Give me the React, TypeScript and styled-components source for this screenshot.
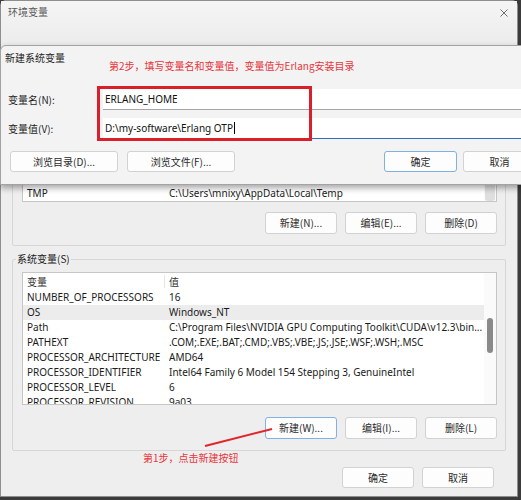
import React from "react";
import styled, { createGlobalStyle } from "styled-components";

const UI = `"Noto Sans", "Noto Sans CJK SC", sans-serif`;
const CJK = `"Noto Sans CJK SC", "Noto Sans", sans-serif`;
const NOTE_RED = "#e8363c";

const GlobalStyle = createGlobalStyle`
  html, body { margin: 0; padding: 0; }
  body { background: #3b3b3b; font-family: ${UI}; }
`;

const Stage = styled.div`
  position: relative;
  width: 521px;
  height: 500px;
  overflow: hidden;
  background: #3b3b3b;
`;

/* ---------- outer "环境变量" window ---------- */

const Window = styled.div`
  width: 518px;
  height: 497px;
  box-sizing: border-box;
  background: #eeeeee;
  border: 1px solid #8e8e8e;
  border-radius: 6px 6px 0 0;
  display: flex;
  flex-direction: column;
`;

const TitleBar = styled.div`
  height: 40px;
  flex: none;
  display: flex;
  justify-content: space-between;
  align-items: flex-start;
  padding: 3px 9px 0 7px;
  background: linear-gradient(#f5f5f5, #ececec);
`;

const TitleText = styled.span`
  font: 10px/16px ${CJK};
  color: #5a5a5a;
`;

const CloseIcon = styled.svg`
  margin-top: 5px;
  width: 8px;
  height: 8px;
`;

const GroupBox = styled.fieldset<{ $gapTop: number }>`
  margin: ${(p) => p.$gapTop}px 11px 0;
  min-width: 0;
  padding: 6px 8px 11px 9px;
  border: 1px solid #d6d6d6;
  border-radius: 2px;
  display: flex;
  flex-direction: column;
`;

const GroupTitle = styled.legend`
  margin-left: -6px;
  padding: 0 1px;
  font: 10px/14px ${CJK};
  color: #222;
`;

const ListBox = styled.div<{ $h: number }>`
  height: ${(p) => p.$h}px;
  box-sizing: border-box;
  border: 1px solid #c6c6c6;
  background: #fff;
  display: flex;
  overflow: hidden;
`;

const ListRows = styled.div<{ $fromBottom?: boolean }>`
  flex: 1;
  min-width: 0;
  display: flex;
  flex-direction: column;
  justify-content: ${(p) => (p.$fromBottom ? "flex-end" : "flex-start")};
`;

const HeaderRow = styled.div`
  flex: none;
  height: 17px;
  display: grid;
  grid-template-columns: 142px 1fr;
  align-items: center;
  padding-left: 4px;
  font: 10px/17px ${CJK};
  color: #333;
`;

const HeaderCell = styled.span`
  position: relative;
  &:first-child::after {
    content: "";
    position: absolute;
    right: 4px;
    top: 2px;
    bottom: 2px;
    border-right: 1px solid #e6e6e6;
  }
`;

const Row = styled.div<{ $selected?: boolean }>`
  flex: none;
  height: 15px;
  display: grid;
  grid-template-columns: 142px 1fr;
  padding-left: 4px;
  font: 10px/15px ${UI};
  color: #1a1a1a;
  white-space: nowrap;
  background: ${(p) => (p.$selected ? "#ececec" : "transparent")};
`;

const Cell = styled.span`
  overflow: hidden;
`;

const ScrollTrack = styled.div`
  flex: none;
  width: 12px;
  background: #fafafa;
  display: flex;
  justify-content: center;
`;

const ScrollThumb = styled.div<{ $top: number; $h: number; $dim?: boolean }>`
  margin-top: ${(p) => p.$top}px;
  width: ${(p) => (p.$dim ? 10 : 6)}px;
  height: ${(p) => p.$h}px;
  border-radius: 3px;
  background: ${(p) => (p.$dim ? "#dedede" : "#8a8a8a")};
`;

const ButtonRow = styled.div<{ $gapTop: number }>`
  margin-top: ${(p) => p.$gapTop}px;
  display: flex;
  justify-content: flex-end;
  gap: 8px;
`;

const Button = styled.button<{ $primary?: boolean; $w?: number; $h?: number }>`
  width: ${(p) => p.$w ?? 72}px;
  height: ${(p) => p.$h ?? 22}px;
  padding: 0;
  box-sizing: border-box;
  border: 1px solid ${(p) => (p.$primary ? "#7fb1e3" : "#d2d2d2")};
  border-radius: 3px;
  background: #fdfdfd;
  font: 10px/1 ${CJK};
  color: #2a2a2a;
  flex: none;
`;

const FooterRow = styled.div`
  margin-top: 16px;
  padding-right: 23px;
  display: flex;
  justify-content: flex-end;
  gap: 8px;
`;

/* ---------- "新建系统变量" dialog on top ---------- */

const Dialog = styled.div`
  position: absolute;
  top: 45px;
  left: 0;
  width: 545px;
  height: 140px;
  box-sizing: border-box;
  background: #f3f3f3;
  border: 1px solid #a3a3a3;
  border-radius: 6px 6px 0 0;
  box-shadow: 0 3px 6px rgba(0, 0, 0, 0.35);
  display: flex;
  flex-direction: column;
`;

const DialogHeader = styled.div`
  display: flex;
  align-items: flex-start;
  padding: 4px 0 0 4px;
`;

const DialogTitle = styled.span`
  font: 10px/16px ${CJK};
  color: #1e1e1e;
`;

const StepNote = styled.span`
  margin: 8px 0 0 44px;
  font: 10px/16px ${CJK};
  color: ${NOTE_RED};
`;

const FieldGrid = styled.div`
  position: relative;
  margin-top: 12px;
  padding: 3px 0;
  display: grid;
  grid-template-columns: 102px 1fr;
  grid-auto-rows: 21px;
  row-gap: 8px;
  align-items: center;
`;

const FieldLabel = styled.span`
  padding-left: 7px;
  font: 10px/14px ${CJK};
  color: #1e1e1e;
`;

const FieldBox = styled.div<{ $focused?: boolean }>`
  height: 21px;
  box-sizing: border-box;
  padding-left: 2px;
  background: #fff;
  border-bottom: ${(p) => (p.$focused ? "1.5px solid #2f6ebd" : "1px solid #a6a6a6")};
  display: flex;
  align-items: center;
  font: 10px/14px ${UI};
  color: #111;
  white-space: nowrap;
`;

const Caret = styled.span`
  display: inline-block;
  width: 1px;
  height: 12px;
  margin-left: 1px;
  background: #000;
`;

const Highlight = styled.div`
  position: absolute;
  left: 96px;
  top: 0;
  width: 215px;
  height: 55px;
  box-sizing: border-box;
  border: 3px solid #d81f2a;
  pointer-events: none;
`;

const DialogButtons = styled.div`
  margin-top: 9px;
  padding: 0 8px 0 9px;
  display: flex;
  gap: 9px;
`;

const ButtonGroup = styled.div`
  margin-left: auto;
  display: flex;
  gap: 6px;
`;

/* ---------- callouts drawn over the window ---------- */

const CalloutLayer = styled.svg`
  position: absolute;
  left: 0;
  top: 0;
  pointer-events: none;
`;

const CalloutText = styled.span`
  position: absolute;
  left: 143px;
  top: 451px;
  font: 10px/14px ${CJK};
  color: ${NOTE_RED};
`;

type Variable = [string, string];

const userVars: Variable[] = [
  ["ChocolateyLastPathUpdate", "133495283715623541"],
  ["GOPATH", "C:\\Users\\mnixy\\go"],
  ["JAVA_HOME", "D:\\my-software\\Java\\jdk-17"],
  ["OneDrive", "C:\\Users\\mnixy\\OneDrive"],
  ["OneDriveConsumer", "C:\\Users\\mnixy\\OneDrive"],
  ["Path", "C:\\Users\\mnixy\\AppData\\Local\\Microsoft\\WindowsApps;"],
  ["TEMP", "C:\\Users\\mnixy\\AppData\\Local\\Temp"],
  ["TMP", "C:\\Users\\mnixy\\AppData\\Local\\Temp"],
];

const systemVars: Variable[] = [
  ["NUMBER_OF_PROCESSORS", "16"],
  ["OS", "Windows_NT"],
  ["Path", "C:\\Program Files\\NVIDIA GPU Computing Toolkit\\CUDA\\v12.3\\bin..."],
  ["PATHEXT", ".COM;.EXE;.BAT;.CMD;.VBS;.VBE;.JS;.JSE;.WSF;.WSH;.MSC"],
  ["PROCESSOR_ARCHITECTURE", "AMD64"],
  ["PROCESSOR_IDENTIFIER", "Intel64 Family 6 Model 154 Stepping 3, GenuineIntel"],
  ["PROCESSOR_LEVEL", "6"],
  ["PROCESSOR_REVISION", "9a03"],
];

function VariableList({
  vars,
  height,
  selected,
  fromBottom,
  thumb,
}: {
  vars: Variable[];
  height: number;
  selected?: string;
  fromBottom?: boolean;
  thumb: { top: number; h: number; dim?: boolean };
}) {
  return (
    <ListBox $h={height}>
      <ListRows $fromBottom={fromBottom}>
        <HeaderRow>
          <HeaderCell>变量</HeaderCell>
          <HeaderCell>值</HeaderCell>
        </HeaderRow>
        {vars.map(([name, value]) => (
          <Row key={name} $selected={name === selected}>
            <Cell>{name}</Cell>
            <Cell>{value}</Cell>
          </Row>
        ))}
      </ListRows>
      <ScrollTrack>
        <ScrollThumb $top={thumb.top} $h={thumb.h} $dim={thumb.dim} />
      </ScrollTrack>
    </ListBox>
  );
}

export default function App() {
  return (
    <>
      <GlobalStyle />
      <Stage>
        <Window>
          <TitleBar>
            <TitleText>环境变量</TitleText>
            <CloseIcon viewBox="0 0 8 8">
              <path d="M0.5 0.5 L7.5 7.5 M7.5 0.5 L0.5 7.5" stroke="#6f6f6f" strokeWidth="1" fill="none" />
            </CloseIcon>
          </TitleBar>

          <GroupBox $gapTop={0}>
            <GroupTitle>mnixy 的用户变量(U)</GroupTitle>
            <VariableList vars={userVars} height={138} fromBottom thumb={{ top: 100, h: 36, dim: true }} />
            <ButtonRow $gapTop={10}>
              <Button>新建(N)...</Button>
              <Button>编辑(E)...</Button>
              <Button>删除(D)</Button>
            </ButtonRow>
          </GroupBox>

          <GroupBox $gapTop={6}>
            <GroupTitle>系统变量(S)</GroupTitle>
            <VariableList vars={systemVars} height={133} selected="OS" thumb={{ top: 45, h: 35 }} />
            <ButtonRow $gapTop={12}>
              <Button $primary>新建(W)...</Button>
              <Button>编辑(I)...</Button>
              <Button>删除(L)</Button>
            </ButtonRow>
          </GroupBox>

          <FooterRow>
            <Button $h={21}>确定</Button>
            <Button $h={21}>取消</Button>
          </FooterRow>
        </Window>

        <Dialog>
          <DialogHeader>
            <DialogTitle>新建系统变量</DialogTitle>
            <StepNote>第2步，填写变量名和变量值，变量值为Erlang安装目录</StepNote>
          </DialogHeader>
          <FieldGrid>
            <FieldLabel>变量名(N):</FieldLabel>
            <FieldBox>ERLANG_HOME</FieldBox>
            <FieldLabel>变量值(V):</FieldLabel>
            <FieldBox $focused>
              D:\my-software\Erlang OTP
              <Caret />
            </FieldBox>
            <Highlight />
          </FieldGrid>
          <DialogButtons>
            <Button $w={108} $h={21}>浏览目录(D)...</Button>
            <Button $w={108} $h={21}>浏览文件(F)...</Button>
            <ButtonGroup>
              <Button $primary $w={73} $h={21}>确定</Button>
              <Button $w={73} $h={21}>取消</Button>
            </ButtonGroup>
          </DialogButtons>
        </Dialog>

        <CalloutLayer width="521" height="500" viewBox="0 0 521 500">
          <line x1="205" y1="446" x2="272" y2="429" stroke="#e0262b" strokeWidth="2" />
        </CalloutLayer>
        <CalloutText>第1步，点击新建按钮</CalloutText>
      </Stage>
    </>
  );
}
